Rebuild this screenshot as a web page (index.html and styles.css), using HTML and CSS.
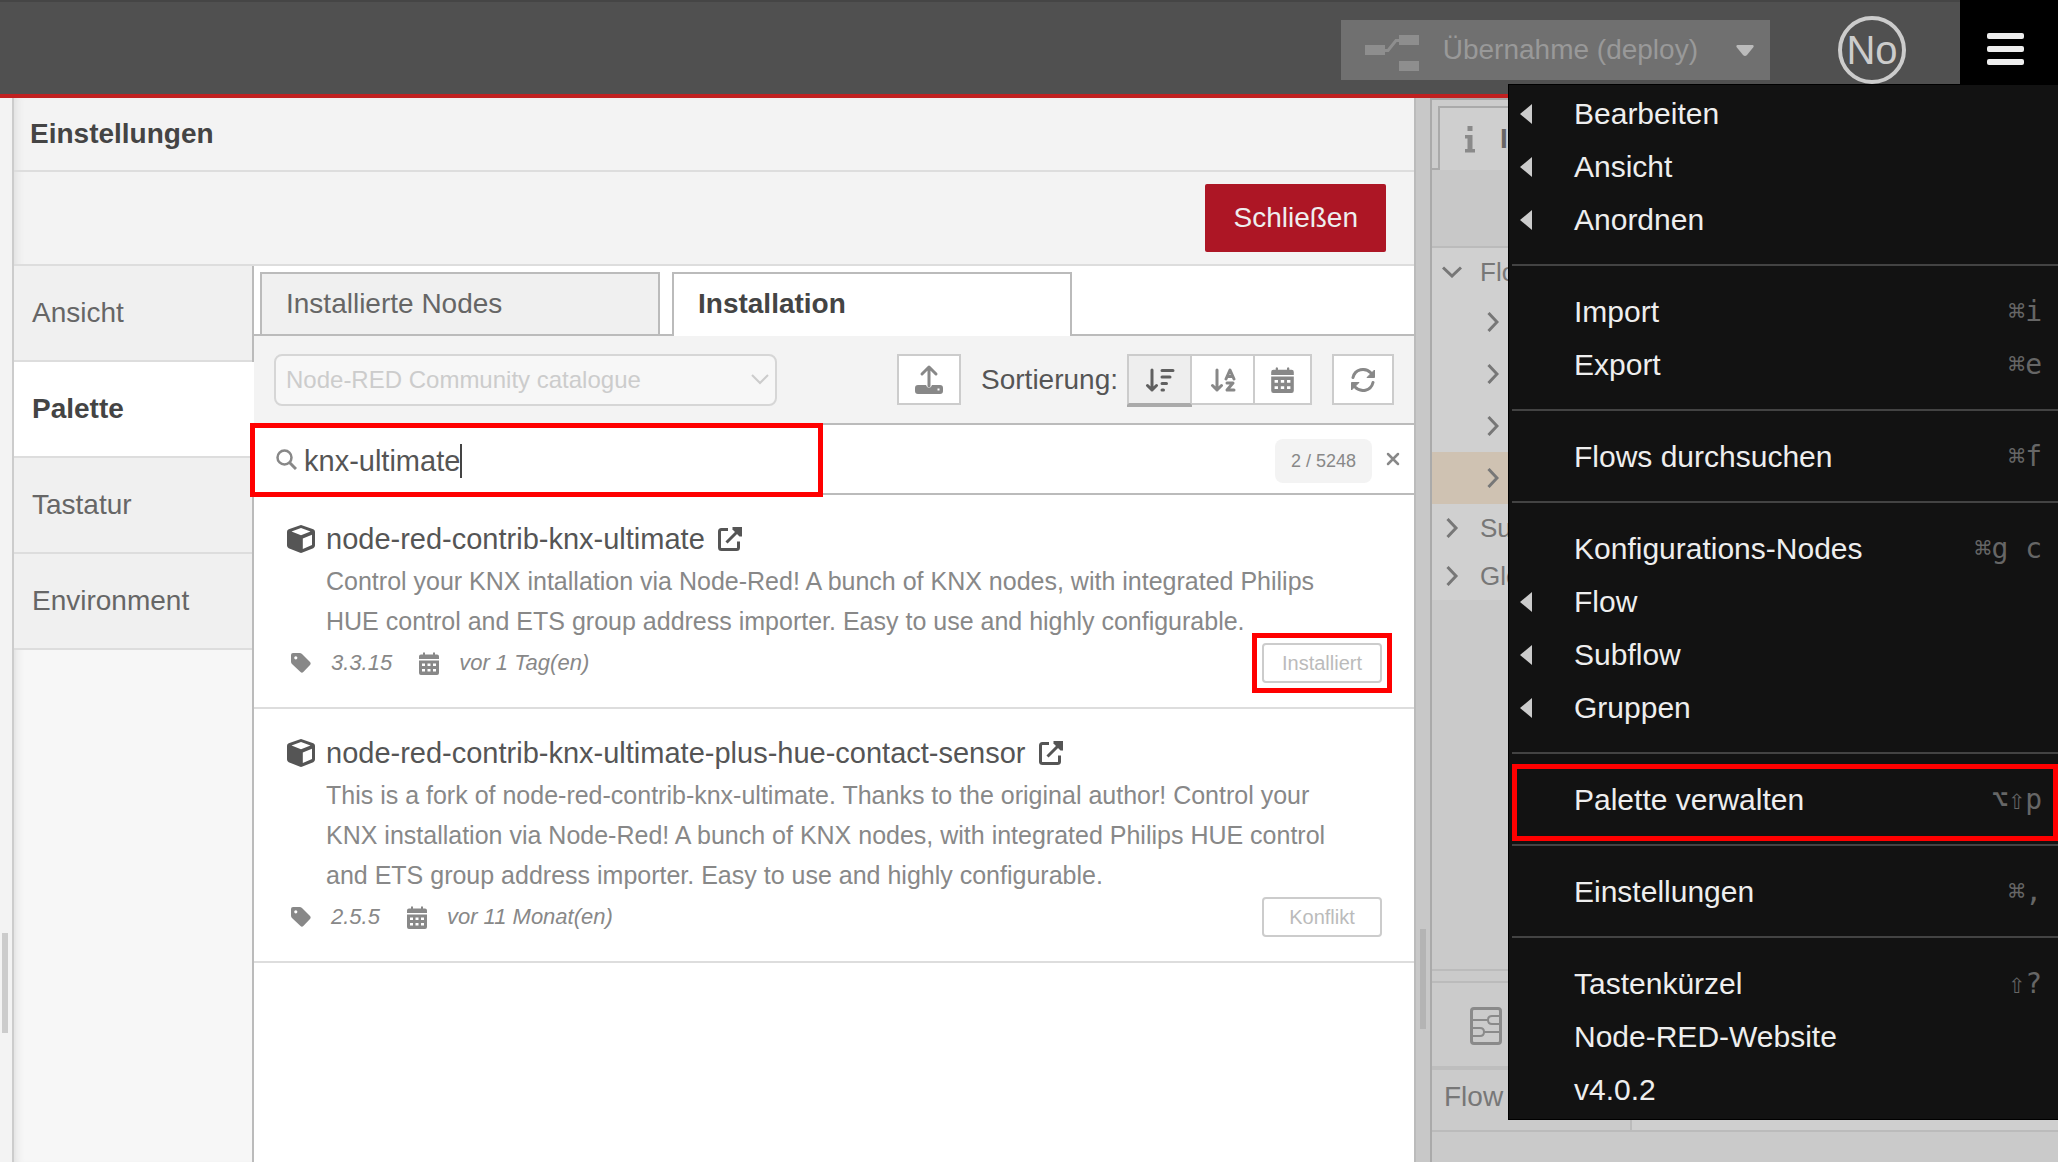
FILE: index.html
```html
<!DOCTYPE html>
<html lang="de">
<head>
    <meta charset="UTF-8">
    <meta name="viewport" content="width=device-width, initial-scale=1.0">
    <title>Node-RED</title>
    <link rel="stylesheet" href="styles.css">
</head>
<body>
    <!-- Icons -->
    <svg class="sprite" aria-hidden="true">
        <symbol id="icon-cube" viewBox="0 0 28 28">
            <path fill="currentColor" fill-rule="evenodd" d="M12.500 0.400 Q14 -0.200 15.500 0.400 L26.300 4.200 Q28 5 28 6.800 V20.500 Q28 22.300 26.300 23.200 L15.500 27.600 Q14 28.300 12.500 27.600 L1.700 23.200 Q0 22.300 0 20.500 V6.800 Q0 5 1.700 4.200 Z M14 3 L4.500 6.500 L14 10.300 L23.500 6.500 Z M15.800 13.500 V24 L25 20 V9.800 Z"/>
        </symbol>
        <symbol id="icon-link" viewBox="0 0 24 24">
            <path fill="none" stroke="currentColor" stroke-width="3" stroke-linejoin="round" d="M10 2.500 H3.500 Q1.500 2.500 1.500 4.500 V20.500 Q1.500 22.500 3.500 22.500 H18.500 Q20.500 22.500 20.500 20.500 V14.500 M8.500 15.500 L20 4"/>
            <path fill="currentColor" d="M14.500 0 H24 V9.500 L21.500 9.500 L14.500 2.500 Z"/>
        </symbol>
        <symbol id="icon-tag" viewBox="0 0 20 20">
            <path fill="currentColor" fill-rule="evenodd" d="M0 2 Q0 0 2 0 H8.500 Q10 0 11 1 L19 9 Q20.300 10.500 19 12 L12.300 19 Q11 20.300 9.500 19 L1 11 Q0 10 0 8.500 Z M4.800 3.200 A1.600 1.600 0 1 0 4.800 6.400 A1.600 1.600 0 1 0 4.800 3.200 Z"/>
        </symbol>
        <symbol id="icon-calendar" viewBox="0 0 20 23">
            <path fill="currentColor" fill-rule="evenodd" d="M4 0.800 Q5 -0.500 6 0.800 V2.500 H14 V0.800 Q15 -0.500 16 0.800 V2.500 H18 Q20 2.500 20 4.500 V7 H0 V4.500 Q0 2.500 2 2.500 H4 Z M0 8.500 H20 V21 Q20 23 18 23 H2 Q0 23 0 21 Z M3 11.500 V14 H6 V11.500 Z M8.500 11.500 V14 H11.500 V11.500 Z M14 11.500 V14 H17 V11.500 Z M3 17 V19.500 H6 V17 Z M8.500 17 V19.500 H11.500 V17 Z M14 17 V19.500 H17 V17 Z"/>
        </symbol>
        <symbol id="icon-right" viewBox="0 0 12 20">
            <path fill="none" stroke="currentColor" stroke-width="3" d="M1.500 1 L10 10 L1.500 19"/>
        </symbol>
        <symbol id="icon-down" viewBox="0 0 20 12">
            <path fill="none" stroke="currentColor" stroke-width="3" d="M1 1.500 L10 10 L19 1.500"/>
        </symbol>
    </svg>

    <header class="header">
        <button class="deploy" disabled>
            <svg class="deploy-icon" viewBox="0 0 54 36" aria-hidden="true">
                <path fill="#8e8e8e" d="M0 10h20v10h-20z M34 0h20v10h-20z M34 26h20v10h-20z"/>
                <path fill="none" stroke="#8e8e8e" stroke-width="3" d="M20 15.500 H23 L31 5.500 H34"/>
            </svg>
            <span>Übernahme (deploy)</span>
            <svg class="deploy-caret" viewBox="0 0 18 11" aria-hidden="true"><path fill="#bbb" d="M1.500 0h15q1.500 0 1 2l-6.500 8q-2 2-4 0l-6.500-8q-.5-2 1-2z"/></svg>
        </button>
        <button class="user">No</button>
        <button class="menu-button" aria-label="Menü">
            <span></span>
            <span></span>
            <span></span>
        </button>
        <nav class="menu">
            <a class="sub" href="#">Bearbeiten</a>
            <a class="sub" href="#">Ansicht</a>
            <a class="sub" href="#">Anordnen</a>
            <hr>
            <a href="#">Import <kbd>⌘i</kbd></a>
            <a href="#">Export <kbd>⌘e</kbd></a>
            <hr>
            <a href="#">Flows durchsuchen <kbd>⌘f</kbd></a>
            <hr>
            <a href="#">Konfigurations-Nodes <kbd>⌘g c</kbd></a>
            <a class="sub" href="#">Flow</a>
            <a class="sub" href="#">Subflow</a>
            <a class="sub" href="#">Gruppen</a>
            <hr>
            <a class="marked" href="#">Palette verwalten <kbd>⌥⇧p</kbd></a>
            <hr>
            <a href="#">Einstellungen <kbd>⌘,</kbd></a>
            <hr>
            <a href="#">Tastenkürzel <kbd>⇧?</kbd></a>
            <a href="#">Node-RED-Website</a>
            <a href="#">v4.0.2</a>
        </nav>
    </header>

    <div class="workspace">
        <div class="edge"><div class="grip"></div></div>

        <main class="tray">
            <h1>Einstellungen</h1>
            <div class="tray-toolbar">
                <button class="close">Schließen</button>
            </div>
            <div class="tray-body">
                <nav class="sections">
                    <a href="#">Ansicht</a>
                    <a class="active" href="#">Palette</a>
                    <a href="#">Tastatur</a>
                    <a href="#">Environment</a>
                </nav>

                <div class="palette">
                    <div class="tabs">
                        <a href="#">Installierte Nodes</a>
                        <a class="active" href="#">Installation</a>
                    </div>

                    <div class="filter">
                        <select class="catalogue" aria-label="Katalog" disabled>
                            <option>Node-RED Community catalogue</option>
                        </select>
                        <button class="tool upload" aria-label="Hochladen">
                            <svg width="28" height="32" viewBox="0 0 28 32" aria-hidden="true">
                                <path fill="none" stroke="#888" stroke-width="3" stroke-linecap="round" stroke-linejoin="round" d="M14 22 V3 M7 10 L14 3 L21 10"/>
                                <path fill="#888" fill-rule="evenodd" d="M3 21 H11 Q12 24 14 24 Q16 24 17 21 H25 Q28 21 28 24 V27 Q28 30 25 30 H3 Q0 30 0 27 V24 Q0 21 3 21 Z M22.500 24.500 v2 h2 v-2 Z"/>
                            </svg>
                        </button>
                        <span class="sort-label">Sortierung:</span>
                        <div class="sort">
                            <button class="tool selected" aria-label="Relevanz">
                                <svg width="30" height="24" viewBox="0 0 30 24" aria-hidden="true">
                                    <path fill="none" stroke="#606060" stroke-width="3" stroke-linecap="round" stroke-linejoin="round" d="M7 2 V22 M2.500 17.500 L7 22 L11.500 17.500 M17 2.500 H28 M17 9 H25 M17 15.500 H21.500 M17 22 H18.500"/>
                                </svg>
                            </button>
                            <button class="tool" aria-label="Alphabetisch">
                                <svg width="26" height="24" viewBox="0 0 26 24" aria-hidden="true">
                                    <path fill="none" stroke="#888" stroke-width="3" stroke-linecap="round" stroke-linejoin="round" d="M7 2 V22 M2.500 17.500 L7 22 L11.500 17.500"/>
                                    <path fill="none" stroke="#888" stroke-width="3" stroke-linecap="round" stroke-linejoin="round" d="M16 11 L20 2 L24 11 M18 8.500 H22 M17 15 H23 L17 22 H24"/>
                                </svg>
                            </button>
                            <button class="tool" aria-label="Datum">
                                <svg width="23" height="26"><use href="#icon-calendar"/></svg>
                            </button>
                        </div>
                        <button class="tool refresh" aria-label="Aktualisieren">
                            <svg width="26" height="24" viewBox="0 0 26 24" aria-hidden="true">
                                <path fill="none" stroke="#888" stroke-width="3" stroke-linecap="round" d="M3 9.500 C5 1 15 -1 21 5 L23 7 M23 14.500 C21 23 11 25 5 19 L3 17"/>
                                <path fill="#888" stroke="#888" stroke-linejoin="round" d="M24.500 2 V9.500 H17 Z M1.500 22 V14.500 H9 Z"/>
                            </svg>
                        </button>
                    </div>

                    <div class="search">
                        <svg class="search-icon" width="21" height="21" viewBox="0 0 21 21" aria-hidden="true">
                            <circle cx="8.500" cy="8.500" r="7" fill="none" stroke="#888" stroke-width="2.500"/>
                            <path stroke="#888" stroke-width="3" d="M13.500 13.500 L20 20"/>
                        </svg>
                        <input type="text" value="knx-ultimate" aria-label="Module durchsuchen">
                        <span class="caret"></span>
                        <span class="count">2 / 5248</span>
                        <button class="clear" aria-label="Leeren">
                            <svg width="14" height="14" viewBox="0 0 14 14" aria-hidden="true"><path stroke="#888" stroke-width="2.500" stroke-linecap="round" d="M2 2 L12 12 M12 2 L2 12"/></svg>
                        </button>
                    </div>

                    <ul class="modules">
                        <li>
                            <div class="name">
                                <svg width="28" height="28"><use href="#icon-cube"/></svg>
                                <span>node-red-contrib-knx-ultimate</span>
                                <a href="#" aria-label="Öffnen"><svg width="24" height="24"><use href="#icon-link"/></svg></a>
                            </div>
                            <p>Control your KNX intallation via Node-Red! A bunch of KNX nodes, with integrated Philips HUE control and ETS group address importer. Easy to use and highly configurable.</p>
                            <div class="meta">
                                <svg width="20" height="20"><use href="#icon-tag"/></svg>
                                <em>3.3.15</em>
                                <svg width="20" height="23"><use href="#icon-calendar"/></svg>
                                <em>vor 1 Tag(en)</em>
                                <div class="action marked"><button disabled>Installiert</button></div>
                            </div>
                        </li>
                        <li>
                            <div class="name">
                                <svg width="28" height="28"><use href="#icon-cube"/></svg>
                                <span>node-red-contrib-knx-ultimate-plus-hue-contact-sensor</span>
                                <a href="#" aria-label="Öffnen"><svg width="24" height="24"><use href="#icon-link"/></svg></a>
                            </div>
                            <p>This is a fork of node-red-contrib-knx-ultimate. Thanks to the original author! Control your KNX installation via Node-Red! A bunch of KNX nodes, with integrated Philips HUE control and ETS group address importer. Easy to use and highly configurable.</p>
                            <div class="meta">
                                <svg width="20" height="20"><use href="#icon-tag"/></svg>
                                <em>2.5.5</em>
                                <svg width="20" height="23"><use href="#icon-calendar"/></svg>
                                <em>vor 11 Monat(en)</em>
                                <div class="action"><button disabled>Konflikt</button></div>
                            </div>
                        </li>
                    </ul>
                </div>
            </div>
        </main>

        <div class="separator"><div class="grip"></div></div>

        <aside class="sidebar">
            <div class="sidebar-tabs">
                <div class="sidebar-tab">
                    <svg width="12" height="28" viewBox="0 0 12 28" aria-hidden="true"><path fill="#8a8a8a" d="M3.500 1h5v5h-5z M1 10h7.500v14h2.500v3.500h-10v-3.500h2.500v-10.500h-2.500z"/></svg>
                    <b>Info</b>
                </div>
            </div>
            <div class="sidebar-toolbar"></div>
            <ul class="outline">
                <li><svg width="20" height="12"><use href="#icon-down"/></svg><span>Flows</span></li>
                <li class="child"><svg width="12" height="20"><use href="#icon-right"/></svg></li>
                <li class="child"><svg width="12" height="20"><use href="#icon-right"/></svg></li>
                <li class="child"><svg width="12" height="20"><use href="#icon-right"/></svg></li>
                <li class="child current"><svg width="12" height="20"><use href="#icon-right"/></svg></li>
                <li><svg width="20" height="20"><use href="#icon-right"/></svg><span>Subflows</span></li>
                <li><svg width="20" height="20"><use href="#icon-right"/></svg><span>Globale</span></li>
            </ul>
            <div class="info-separator"></div>
            <div class="info-header">
                <svg width="32" height="38" viewBox="0 0 32 38" aria-hidden="true">
                    <path fill="none" stroke="#8a8a8a" stroke-width="3" d="M4 1.500 H28 Q30.500 1.500 30.500 4 V34 Q30.500 36.500 28 36.500 H4 Q1.500 36.500 1.500 34 V4 Q1.500 1.500 4 1.500 Z"/>
                    <path fill="none" stroke="#8a8a8a" stroke-width="2" d="M2 13 H18 M30 9 H22 Q18 9 18 13 Q18 17 22 17 H30 M30 25 H14 M2 21 H10 Q14 21 14 25 Q14 29 10 29 H2"/>
                </svg>
            </div>
            <div class="info-row">
                <span>Flow</span>
                <span></span>
            </div>
        </aside>
    </div>
</body>
</html>
```

FILE: styles.css
```css
*, *::before, *::after {
    box-sizing: border-box;
}
body {
    margin: 0;
    height: 100vh;
    display: flex;
    flex-direction: column;
    overflow: hidden;
    font-family: "Liberation Sans", Arial, sans-serif;
    font-size: 28px;
    color: #555;
}
a {
    color: inherit;
    text-decoration: none;
}
button, input, select {
    font-family: inherit;
    font-size: inherit;
    margin: 0;
}
svg {
    flex: none;
}
ul {
    list-style: none;
    margin: 0;
    padding: 0;
}
.sprite {
    position: absolute;
    width: 0;
    height: 0;
}

/* Header */
.header {
    position: relative;
    z-index: 2;
    flex: none;
    height: 98px;
    display: flex;
    justify-content: flex-end;
    align-items: flex-start;
    background: #505050;
    border-bottom: 4px solid #c02020;
    box-shadow: inset 0 2px #454545;
}
.deploy {
    display: flex;
    align-items: center;
    height: 60px;
    margin: 20px 68px 0 0;
    padding: 0 16px 0 24px;
    border: none;
    background: #707070;
    color: #999;
}
.deploy-icon {
    width: 54px;
    height: 36px;
    margin: 6px 24px 0 0;
}
.deploy-caret {
    width: 18px;
    height: 11px;
    margin-left: 38px;
}
.user {
    width: 68px;
    height: 68px;
    margin: 16px 54px 0 0;
    padding: 0;
    border: 4px solid #ccc;
    border-radius: 50%;
    background: none;
    color: #ccc;
    font-size: 40px;
}
.menu-button {
    display: flex;
    flex-direction: column;
    justify-content: center;
    align-items: center;
    gap: 7px;
    width: 98px;
    height: 84px;
    padding: 14px 8px 0 0;
    border: none;
    background: #000;
}
.menu-button span {
    width: 37px;
    height: 6px;
    border-radius: 2px;
    background: #eee;
}

/* Main menu */
.menu {
    position: absolute;
    top: 84px;
    right: 0;
    width: 550px;
    padding: 2px 0 3px;
    border: 1px solid #000;
    border-right: none;
    background: #121212;
    color: #eee;
    font-size: 30px;
}
.menu a {
    position: relative;
    display: flex;
    align-items: center;
    justify-content: space-between;
    height: 53px;
    padding: 0 16px 0 65px;
}
.menu hr {
    margin: 18px 0 19px 3px;
    border: none;
    border-top: 2px solid #434343;
}
.menu kbd {
    color: #666;
    font-family: "DejaVu Sans Mono", monospace;
    font-size: 28px;
}
.menu .sub::before {
    content: "";
    position: absolute;
    left: 11px;
    border: 10px solid transparent;
    border-left: none;
    border-right: 12px solid #ccc;
}
.menu .marked::after {
    content: "";
    position: absolute;
    inset: -9px 0 -15px 3px;
    border: 5px solid #f00;
}

/* Workspace */
.workspace {
    flex: 1;
    display: flex;
    min-height: 0;
}
.edge {
    flex: none;
    width: 14px;
    display: flex;
    align-items: flex-end;
    padding: 0 4px 129px 2px;
    background: #f3f3f3;
    border-right: 2px solid #ccc;
}
.grip {
    width: 6px;
    height: 100px;
    background: #ccc;
}
.separator {
    flex: none;
    width: 18px;
    display: flex;
    align-items: flex-end;
    justify-content: center;
    padding-bottom: 133px;
    background: #c8c8c8;
    border-left: 2px solid #bbb;
    border-right: 2px solid #aaa;
}
.separator .grip {
    background: #b4b4b4;
}

/* Tray */
.tray {
    flex: 1;
    min-width: 0;
    display: flex;
    flex-direction: column;
    background: #f3f3f3;
    box-shadow: inset 8px 0 8px -6px #ddd;
}
.tray h1 {
    margin: 0;
    padding: 0 16px;
    font-size: 28px;
    line-height: 72px;
    color: #444;
    border-bottom: 2px solid #ddd;
}
.tray-toolbar {
    display: flex;
    justify-content: flex-end;
    padding: 12px 28px;
    border-bottom: 2px solid #ddd;
}
.close {
    height: 68px;
    padding: 0 28px;
    border: none;
    border-radius: 2px;
    background: #ad1625;
    color: #eee;
}
.tray-body {
    flex: 1;
    display: flex;
}
.sections {
    flex: none;
    width: 240px;
    display: flex;
    flex-direction: column;
    background: #f7f7f7;
    box-shadow: inset -2px 0 #bbb, inset 8px 0 8px -6px #ddd;
}
.sections a {
    padding: 0 18px;
    line-height: 94px;
    margin-right: 2px;
    color: #666;
    background: #f0f0f0;
    border-bottom: 2px solid #ddd;
}
.sections .active {
    margin-right: 0;
    background: #fff;
    color: #444;
    font-weight: bold;
}

/* Palette */
.palette {
    flex: 1;
    min-width: 0;
    background: #fff;
}
.tabs {
    display: flex;
    gap: 12px;
    height: 70px;
    padding: 6px 6px 0;
    box-shadow: inset 0 -2px #bbb;
}
.tabs a {
    width: 400px;
    padding: 0 24px;
    line-height: 60px;
    border: 2px solid #bbb;
    background: #f0f0f0;
    color: #666;
}
.tabs .active {
    border-bottom: none;
    background: #fff;
    color: #444;
    font-weight: bold;
}
.filter {
    display: flex;
    align-items: center;
    height: 89px;
    padding: 0 20px;
    background: #f3f3f3;
    border-bottom: 2px solid #bbb;
}
.catalogue {
    appearance: none;
    width: 503px;
    height: 52px;
    padding: 0 10px;
    border: 2px solid #d6d6d6;
    border-radius: 8px;
    background: #f7f7f7 url("data:image/svg+xml,%3Csvg xmlns='http://www.w3.org/2000/svg' width='18' height='11'%3E%3Cpath d='M1 1 L9 9 L17 1' fill='none' stroke='%23ccc' stroke-width='2'/%3E%3C/svg%3E") no-repeat right 6px center;
    color: #ccc;
    font-size: 24px;
    opacity: 1;
}
.tool {
    display: flex;
    align-items: center;
    justify-content: center;
    width: 64px;
    height: 51px;
    padding: 0;
    border: 2px solid #ccc;
    background: #fff;
    color: #888;
}
.upload {
    margin-left: auto;
}
.sort-label {
    margin: 0 9px 0 20px;
}
.sort {
    display: flex;
}
.sort .tool + .tool {
    width: 63px;
    border-left: none;
}
.sort .tool:last-child {
    width: 57px;
}
.sort .selected {
    width: 65px;
    background: #eee;
    box-shadow: 0 2px #aaa;
    border-bottom-color: #aaa;
}
.refresh {
    width: 62px;
    margin-left: 20px;
}
.search {
    position: relative;
    display: flex;
    align-items: center;
    height: 70px;
    padding: 4px 14px 0 22px;
    border-bottom: 2px solid #bbb;
}
.search::after {
    content: "";
    position: absolute;
    left: -4px;
    top: -2px;
    width: 573px;
    height: 74px;
    border: 5px solid #f00;
    pointer-events: none;
}
.search-icon {
    margin-bottom: 4px;
}
.search input {
    field-sizing: content;
    margin-left: 7px;
    padding: 0;
    border: none;
    outline: none;
    background: none;
    color: #555;
    font-size: 29px;
}
.caret {
    width: 2px;
    height: 34px;
    background: #444;
}
.count {
    margin-left: auto;
    padding: 0 16px;
    line-height: 44px;
    border-radius: 8px;
    background: #f3f3f3;
    color: #888;
    font-size: 18px;
}
.clear {
    display: flex;
    margin: 0 0 4px 14px;
    padding: 0;
    border: none;
    background: none;
}

/* Module list */
.modules li {
    display: flex;
    flex-direction: column;
    gap: 2px;
    padding: 24px 32px;
    border-bottom: 2px solid #ddd;
}
.name {
    display: flex;
    align-items: center;
    height: 40px;
    padding-left: 1px;
    font-size: 29px;
}
.name span {
    margin: 0 13px 0 11px;
}
.name a {
    display: flex;
}
.modules p {
    margin: 0 26px 0 40px;
    color: #888;
    font-size: 25px;
    line-height: 40px;
}
.meta {
    display: flex;
    align-items: center;
    height: 40px;
    padding-left: 5px;
    color: #888;
    font-size: 22px;
}
.meta em {
    margin: 0 27px 0 20px;
}
.action {
    margin-left: auto;
}
.action button {
    display: block;
    width: 120px;
    height: 40px;
    padding: 0;
    border: 2px solid #ccc;
    border-radius: 4px;
    background: #fff;
    color: #bbb;
    font-size: 20px;
}
.action.marked {
    outline: 5px solid #f00;
    outline-offset: 5px;
}

/* Sidebar */
.sidebar {
    flex: none;
    width: 626px;
    display: flex;
    flex-direction: column;
    background: #cacaca;
    color: #777;
}
.sidebar-tabs {
    height: 72px;
    padding: 8px 6px 0;
    background: #ccc;
    box-shadow: inset 0 2px #aaa, inset 0 -2px #aaa;
}
.sidebar-tab {
    display: flex;
    align-items: center;
    gap: 24px;
    width: 300px;
    height: 64px;
    padding-left: 24px;
    border: 2px solid #aaa;
    border-bottom: none;
    background: #cfcfcf;
    color: #666;
}
.sidebar-toolbar {
    height: 78px;
    background: #c8c8c8;
    border-bottom: 2px solid #bbb;
}
.outline {
    background: #d0d0d0;
    font-size: 26px;
}
.outline li {
    display: flex;
    align-items: center;
    gap: 18px;
    height: 48px;
    padding-left: 10px;
}
.outline .child {
    height: 52px;
    padding-left: 55px;
}
.outline .current {
    background: #cfc2b2;
}
.info-separator {
    height: 14px;
    margin-top: auto;
    border-top: 2px solid #bbb;
    border-bottom: 2px solid #bbb;
}
.info-header {
    height: 87px;
    padding: 24px 38px;
    background: #cbcbcb;
    border-bottom: 4px solid #bebebe;
}
.info-row {
    display: flex;
    height: 62px;
    margin-bottom: 30px;
    line-height: 54px;
    border-bottom: 2px solid #bbb;
    background: #cfcfcf;
}
.info-row span:first-child {
    width: 200px;
    padding-left: 12px;
    border-right: 2px solid #bbb;
    background: #cbcbcb;
}
```
